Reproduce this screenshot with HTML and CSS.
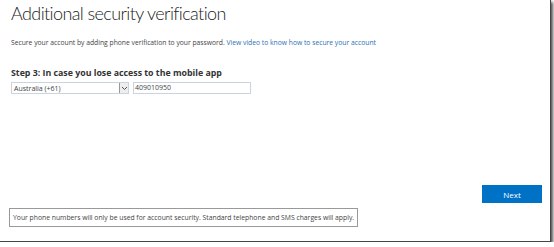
FILE: index.html
```html
<!DOCTYPE html>
<html>
  <head>
    <meta name="viewport" content="width=device-width, initial-scale=1.0" />
    <link rel="stylesheet" href="styles.css">
  </head>
  <body>
    <div class="frame">
      <h1 class="title">Additional security verification</h1>
      <p class="intro">
        Secure your account by adding phone verification to your password.
        <a href="#">View video to know how to secure your account</a>
      </p>

      <h2 class="step">Step 3: In case you lose access to the mobile app</h2>
      <div class="phone-row">
        <div class="select">
          <span class="select-text">Australia (+61)</span>
          <span class="select-arrow">
            <svg width="7" height="5" viewBox="0 0 7 5"><path d="M1 1 L3.5 3.5 L6 1" fill="none" stroke="#555" stroke-width="1"/></svg>
          </span>
        </div>
        <div class="input">409010950</div>
      </div>

      <div class="actions">
        <button class="next">Next</button>
      </div>

      <div class="notice">Your phone numbers will only be used for account security. Standard telephone and SMS charges will apply.</div>
    </div>
  </body>
</html>
```

FILE: styles.css
```css
* {
  box-sizing: border-box;
  margin: 0;
  padding: 0;
}

body {
  margin: 0;
  background: #ffffff;
  font-family: "Open Sans", "Liberation Sans", sans-serif;
  color: #333;
}

.frame {
  width: 551px;
  height: 242px;
  background: #ffffff;
  border-right: 1px solid #444;
  border-bottom: 1px solid #444;
  box-shadow: 2px 2px 3px rgba(0, 0, 0, 0.7);
  padding: 0 0 0 11px;
  display: flex;
  flex-direction: column;
}

.title {
  font-family: Lato, "Open Sans", sans-serif;
  font-size: 18px;
  font-weight: 300;
  letter-spacing: -0.6px;
  color: #222;
  line-height: 24px;
  margin-top: 1px;
}

.intro {
  font-size: 6.75px;
  color: #444;
  margin-top: 13px;
  line-height: 10px;
}

.intro a {
  color: #2a6fb8;
  text-decoration: none;
}

.step {
  font-size: 8.8px;
  font-weight: 700;
  color: #333;
  margin-top: 19px;
  line-height: 12px;
}

.phone-row {
  display: flex;
  gap: 4px;
  margin-top: 3px;
  align-items: center;
}

.select {
  width: 118px;
  height: 12px;
  border: 1px solid #c8d4e0;
  display: flex;
  align-items: center;
  justify-content: space-between;
  font-size: 7px;
  color: #444;
}

.select-text {
  padding-left: 2px;
}

.select-arrow {
  width: 9px;
  height: 10px;
  border-left: 1px solid #999;
  background: #eee;
  display: flex;
  align-items: center;
  justify-content: center;
}

.input {
  width: 118px;
  height: 12px;
  border: 1px solid #c8d4e0;
  font-size: 7px;
  color: #444;
  line-height: 10px;
  padding-left: 1px;
}

.actions {
  display: flex;
  justify-content: flex-end;
  margin-top: 91px;
  padding-right: 8px;
}

.next {
  width: 60px;
  height: 18px;
  border: none;
  background: #0072c6;
  color: #ffffff;
  font-family: inherit;
  font-size: 8px;
}

.notice {
  align-self: flex-start;
  margin-left: -2px;
  margin-top: 5px;
  border: 1px solid #999;
  padding: 4px 3px;
  font-size: 6.8px;
  color: #444;
  line-height: 9px;
}
```
